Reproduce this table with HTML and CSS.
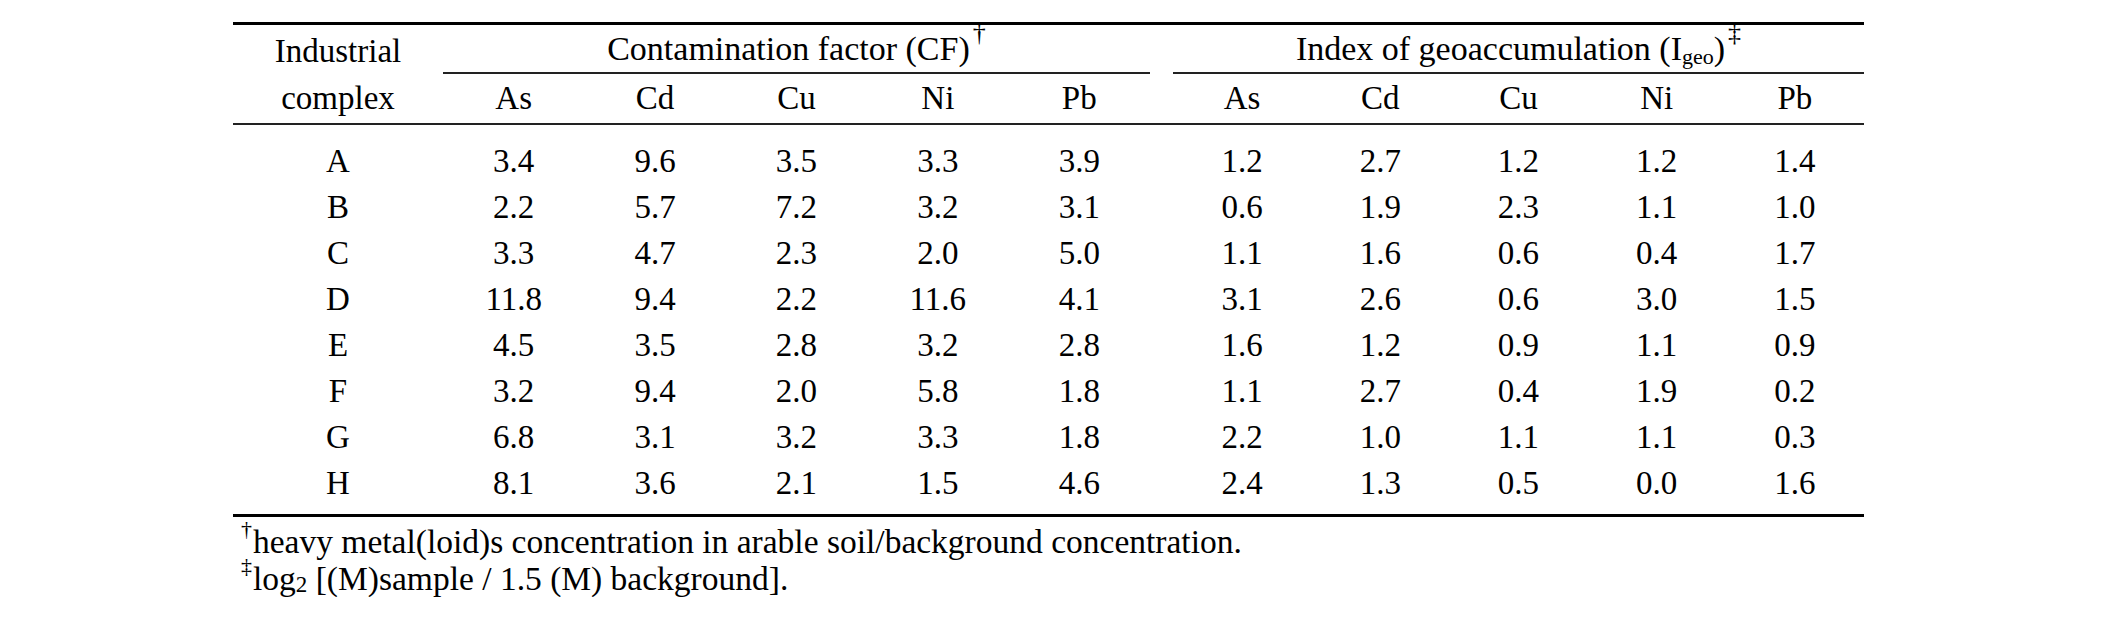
FILE: index.html
```html
<!DOCTYPE html>
<html lang="en">
<head>
<meta charset="utf-8">
<title>Contamination factor and index of geoaccumulation</title>
<link rel="stylesheet" href="styles.css">
</head>
<body>
<div class="page">
  <table class="data">
    <colgroup>
      <col class="c-name">
      <col class="c-cf"><col class="c-cf"><col class="c-cf"><col class="c-cf"><col class="c-cf">
      <col class="c-gap">
      <col class="c-ig"><col class="c-ig"><col class="c-ig"><col class="c-ig"><col class="c-ig">
    </colgroup>
    <thead>
      <tr class="h1">
        <th class="name" rowspan="2">Industrial<br>complex</th>
        <th class="group" colspan="5">Contamination factor (CF)<sup class="hsup">†</sup></th>
        <th class="gap"></th>
        <th class="group" colspan="5">Index of geoaccumulation (I<sub class="hsub">geo</sub>)<sup class="hsup dd">‡</sup></th>
      </tr>
      <tr class="h2">
        <th>As</th><th>Cd</th><th>Cu</th><th>Ni</th><th>Pb</th>
        <th class="gap"></th>
        <th>As</th><th>Cd</th><th>Cu</th><th>Ni</th><th>Pb</th>
      </tr>
    </thead>
    <tbody>
      <tr class="first"><td>A</td><td>3.4</td><td>9.6</td><td>3.5</td><td>3.3</td><td>3.9</td><td></td><td>1.2</td><td>2.7</td><td>1.2</td><td>1.2</td><td>1.4</td></tr>
      <tr><td>B</td><td>2.2</td><td>5.7</td><td>7.2</td><td>3.2</td><td>3.1</td><td></td><td>0.6</td><td>1.9</td><td>2.3</td><td>1.1</td><td>1.0</td></tr>
      <tr><td>C</td><td>3.3</td><td>4.7</td><td>2.3</td><td>2.0</td><td>5.0</td><td></td><td>1.1</td><td>1.6</td><td>0.6</td><td>0.4</td><td>1.7</td></tr>
      <tr><td>D</td><td>11.8</td><td>9.4</td><td>2.2</td><td>11.6</td><td>4.1</td><td></td><td>3.1</td><td>2.6</td><td>0.6</td><td>3.0</td><td>1.5</td></tr>
      <tr><td>E</td><td>4.5</td><td>3.5</td><td>2.8</td><td>3.2</td><td>2.8</td><td></td><td>1.6</td><td>1.2</td><td>0.9</td><td>1.1</td><td>0.9</td></tr>
      <tr><td>F</td><td>3.2</td><td>9.4</td><td>2.0</td><td>5.8</td><td>1.8</td><td></td><td>1.1</td><td>2.7</td><td>0.4</td><td>1.9</td><td>0.2</td></tr>
      <tr><td>G</td><td>6.8</td><td>3.1</td><td>3.2</td><td>3.3</td><td>1.8</td><td></td><td>2.2</td><td>1.0</td><td>1.1</td><td>1.1</td><td>0.3</td></tr>
      <tr class="last"><td>H</td><td>8.1</td><td>3.6</td><td>2.1</td><td>1.5</td><td>4.6</td><td></td><td>2.4</td><td>1.3</td><td>0.5</td><td>0.0</td><td>1.6</td></tr>
    </tbody>
  </table>
  <div class="notes">
    <p><sup class="fsup">†</sup>heavy metal(loid)s concentration in arable soil/background concentration.</p>
    <p><sup class="fsup">‡</sup>log<sub class="fsub">2</sub> [(M)sample / 1.5 (M) background].</p>
  </div>
</div>
</body>
</html>
```
FILE: styles.css
```css
html, body {
  margin: 0;
  padding: 0;
  background: #ffffff;
}

body {
  font-family: "Liberation Serif", "Times New Roman", serif;
  font-size: 33px;
  color: #000000;
}

.page {
  padding: 22px 0 0 233px;
}

.data {
  width: 1631px;
  table-layout: fixed;
  border-collapse: separate;
  border-spacing: 0;
  border-top: 3px solid #000;
  border-bottom: 3px solid #000;
  font-family: "Liberation Serif", "Times New Roman", serif;
  font-size: 33px;
}

.c-name { width: 210px; }
.c-cf { width: 141.4px; }
.c-gap { width: 23px; }
.c-ig { width: 138.2px; }

.data th,
.data td {
  padding: 0;
  text-align: center;
  font-weight: normal;
  white-space: nowrap;
}

.h1 th {
  line-height: 47px;
  border-bottom: 2px solid #222;
}

.h1 th.group {
  font-size: 34px;
}

.h1 th.gap {
  border-bottom: none;
}

.h1 th.name {
  vertical-align: top;
  padding-top: 3px;
  line-height: 47px;
  border-bottom: 2px solid #222;
}

.h2 th {
  line-height: 49px;
  border-bottom: 2px solid #222;
}

.data td {
  line-height: 46px;
}

.data tr.first td {
  padding-top: 13px;
}

.data tr.last td {
  padding-bottom: 8px;
}

.hsup {
  font-size: 26px;
  line-height: 0;
  vertical-align: 19px;
  margin-left: 3px;
}

.hsup.dd {
  vertical-align: 19px;
}

.hsub {
  font-size: 22px;
  line-height: 0;
  vertical-align: -4px;
}

.notes {
  margin-top: 6px;
  padding-left: 8px;
  font-size: 33.5px;
}

.notes p {
  margin: 0;
  line-height: 37px;
}

.fsup {
  font-size: 22px;
  line-height: 0;
  vertical-align: 17px;
  margin-right: 1px;
}

.fsub {
  font-size: 23px;
  line-height: 0;
  vertical-align: -2px;
}
```
